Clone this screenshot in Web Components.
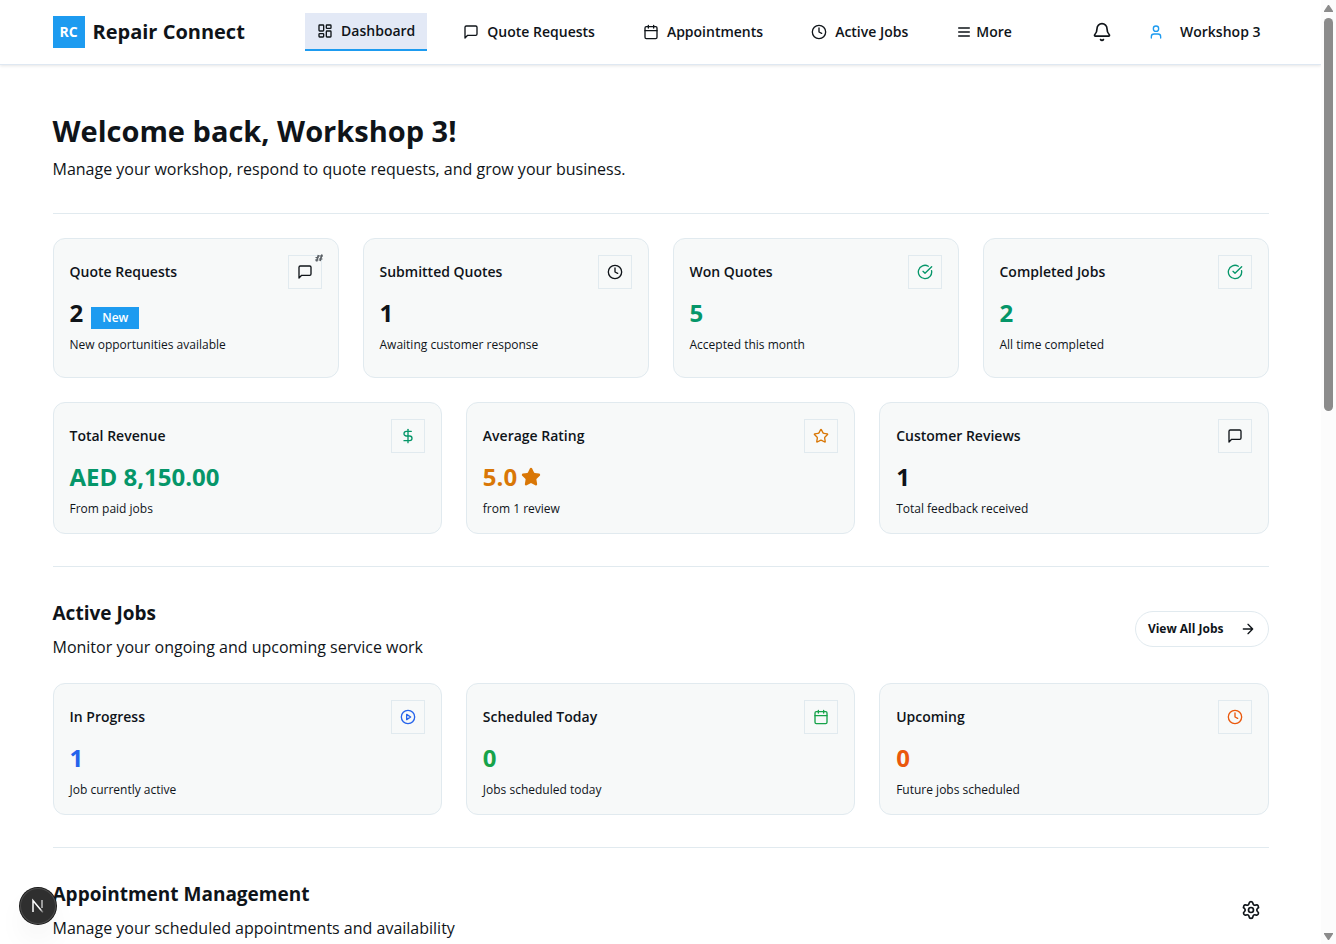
<!DOCTYPE html>
<html lang="en">
<head>
<meta charset="utf-8">
<title>Repair Connect</title>
<style>
  :root {
    --ink: #0f1419;
    --primary: #1d9bf0;
    --line: #e1eaef;
    --surface: #f7f9f9;
    --green: #059669;
    --amber: #d97706;
    --blue: #2563eb;
    --leaf: #16a34a;
    --orange: #ea580c;
  }
  html, body { height: 100%; }
  body {
    margin: 0;
    background: #fff;
    color: var(--ink);
    font-family: "Open Sans", "Noto Sans", sans-serif;
    font-size: 16px;
    line-height: 24px;
    overflow: hidden;
  }
</style>
</head>
<body>
<rc-app>
  <rc-header slot="header"></rc-header>

  <rc-heading level="1" heading="Welcome back, Workshop 3!">Manage your workshop, respond to quote requests, and grow your business.</rc-heading>
  <rc-divider></rc-divider>
  <rc-grid columns="4">
    <rc-stat label="Quote Requests" icon="message" badge="New" spark>2<span slot="note">New opportunities available</span></rc-stat>
    <rc-stat label="Submitted Quotes" icon="clock">1<span slot="note">Awaiting customer response</span></rc-stat>
    <rc-stat label="Won Quotes" icon="check" tone="green">5<span slot="note">Accepted this month</span></rc-stat>
    <rc-stat label="Completed Jobs" icon="check" tone="green">2<span slot="note">All time completed</span></rc-stat>
  </rc-grid>
  <rc-grid columns="3">
    <rc-stat label="Total Revenue" icon="dollar" tone="green">AED 8,150.00<span slot="note">From paid jobs</span></rc-stat>
    <rc-stat label="Average Rating" icon="star" tone="amber" mark="star">5.0<span slot="note">from 1 review</span></rc-stat>
    <rc-stat label="Customer Reviews" icon="message">1<span slot="note">Total feedback received</span></rc-stat>
  </rc-grid>

  <rc-section heading="Active Jobs">
    Monitor your ongoing and upcoming service work
    <rc-button slot="action" icon="arrow">View All Jobs</rc-button>
  </rc-section>
  <rc-grid columns="3">
    <rc-stat label="In Progress" icon="play" tone="blue">1<span slot="note">Job currently active</span></rc-stat>
    <rc-stat label="Scheduled Today" icon="calendar" tone="leaf">0<span slot="note">Jobs scheduled today</span></rc-stat>
    <rc-stat label="Upcoming" icon="clock" tone="orange">0<span slot="note">Future jobs scheduled</span></rc-stat>
  </rc-grid>

  <rc-section heading="Appointment Management">
    Manage your scheduled appointments and availability
    <rc-icon-button slot="action" icon="settings" label="Appointment settings"></rc-icon-button>
  </rc-section>

  <rc-scrollbar slot="scrollbar"></rc-scrollbar>
  <rc-devtools slot="overlay"></rc-devtools>
</rc-app>

<script>
const ICONS = {
  dashboard: '<rect x="3" y="3" width="7" height="9" rx="1"/><rect x="14" y="3" width="7" height="5" rx="1"/><rect x="14" y="12" width="7" height="9" rx="1"/><rect x="3" y="16" width="7" height="5" rx="1"/>',
  message: '<path d="M21 15a2 2 0 0 1-2 2H7l-4 4V5a2 2 0 0 1 2-2h14a2 2 0 0 1 2 2z"/>',
  calendar: '<path d="M8 2v4M16 2v4"/><rect x="3" y="4" width="18" height="18" rx="2"/><path d="M3 10h18"/>',
  clock: '<circle cx="12" cy="12" r="10"/><path d="M12 6v6l4 2"/>',
  menu: '<path d="M4 6h16M4 12h16M4 18h16"/>',
  bell: '<path d="M10.268 21a2 2 0 0 0 3.464 0"/><path d="M3.262 15.326A1 1 0 0 0 4 17h16a1 1 0 0 0 .74-1.673C19.41 13.956 18 12.499 18 8A6 6 0 0 0 6 8c0 4.499-1.411 5.956-2.738 7.326"/>',
  user: '<path d="M19 21v-2a4 4 0 0 0-4-4H9a4 4 0 0 0-4 4v2"/><circle cx="12" cy="7" r="4"/>',
  check: '<path d="M21.801 10A10 10 0 1 1 17 3.335"/><path d="m9 11 3 3L22 4"/>',
  dollar: '<path d="M12 2v20"/><path d="M17 5H9.5a3.5 3.5 0 0 0 0 7h5a3.5 3.5 0 0 1 0 7H6"/>',
  star: '<path d="M11.525 2.295a.53.53 0 0 1 .95 0l2.31 4.679a2.123 2.123 0 0 0 1.595 1.16l5.166.756a.53.53 0 0 1 .294.904l-3.736 3.638a2.123 2.123 0 0 0-.611 1.878l.882 5.14a.53.53 0 0 1-.771.56l-4.618-2.428a2.122 2.122 0 0 0-1.973 0L6.396 21.01a.53.53 0 0 1-.77-.56l.881-5.139a2.122 2.122 0 0 0-.611-1.879L2.16 9.795a.53.53 0 0 1 .294-.906l5.165-.755a2.122 2.122 0 0 0 1.597-1.16z"/>',
  play: '<circle cx="12" cy="12" r="10"/><path d="m10 8 6 4-6 4z"/>',
  arrow: '<path d="M5 12h14M12 5l7 7-7 7"/>',
  settings: '<path d="M9.671 4.136a2.34 2.34 0 0 1 4.659 0 2.34 2.34 0 0 0 3.319 1.915 2.34 2.34 0 0 1 2.33 4.033 2.34 2.34 0 0 0 0 3.831 2.34 2.34 0 0 1-2.33 4.033 2.34 2.34 0 0 0-3.319 1.915 2.34 2.34 0 0 1-4.659 0 2.34 2.34 0 0 0-3.32-1.915 2.34 2.34 0 0 1-2.33-4.033 2.34 2.34 0 0 0 0-3.831A2.34 2.34 0 0 1 6.35 6.051a2.34 2.34 0 0 0 3.319-1.915"/><circle cx="12" cy="12" r="3"/>'
};

class Base extends HTMLElement {
  connectedCallback() {
    if (this.shadowRoot) return;
    this.attachShadow({ mode: 'open' }).innerHTML =
      `<style>*{box-sizing:border-box}:host{display:block}${this.css()}</style>${this.html()}`;
  }
  attr(name, fallback = '') { return this.getAttribute(name) ?? fallback; }
  css() { return ''; }
  html() { return '<slot></slot>'; }
}

customElements.define('rc-icon', class extends Base {
  css() {
    const s = this.attr('size', '16');
    return `:host{display:block;flex:none;width:${s}px;height:${s}px}svg{display:block;width:100%;height:100%}`;
  }
  html() {
    const fill = this.hasAttribute('filled') ? 'currentColor' : 'none';
    return `<svg viewBox="0 0 24 24" fill="${fill}" stroke="currentColor" stroke-width="2" stroke-linecap="round" stroke-linejoin="round" aria-hidden="true">${ICONS[this.attr('name')]}</svg>`;
  }
});

customElements.define('rc-app', class extends Base {
  css() { return `
    :host{display:flex;height:100vh;overflow:hidden}
    .view{flex:1;min-width:0;overflow:hidden}
    main{display:block;max-width:1280px;margin:0 auto;padding:48px 32px}
  `; }
  html() { return `
    <div class="view"><slot name="header"></slot><main><slot></slot></main></div>
    <slot name="scrollbar"></slot><slot name="overlay"></slot>`; }
});

customElements.define('rc-header', class extends Base {
  css() { return `
    :host{border-bottom:1px solid #dfe8f2;box-shadow:0 1px 3px rgba(0,0,0,.1)}
    header{display:flex;align-items:center;justify-content:space-between;max-width:1280px;height:64px;margin:0 auto;padding:0 32px}
    .brand{display:flex;align-items:center;gap:8px;color:inherit;text-decoration:none;font-size:20px;font-weight:700;line-height:28px}
    .logo{display:grid;place-items:center;width:32px;height:32px;background:var(--primary);color:#fff;font-size:14px;font-weight:700;line-height:20px}
    nav,.tools{display:flex;align-items:center}
    nav{gap:24px}
    .tools{gap:16px}
  `; }
  html() { return `
    <header>
      <a class="brand" href="#"><span class="logo">RC</span><span>Repair Connect</span></a>
      <nav aria-label="Main">
        <rc-nav-link icon="dashboard" active>Dashboard</rc-nav-link>
        <rc-nav-link icon="message">Quote Requests</rc-nav-link>
        <rc-nav-link icon="calendar">Appointments</rc-nav-link>
        <rc-nav-link icon="clock">Active Jobs</rc-nav-link>
        <rc-menu-button icon="menu">More</rc-menu-button>
      </nav>
      <div class="tools">
        <rc-icon-button icon="bell" label="Notifications"></rc-icon-button>
        <rc-menu-button icon="user" account>Workshop 3</rc-menu-button>
      </div>
    </header>`; }
});

customElements.define('rc-nav-link', class extends Base {
  css() { return `
    a{display:flex;align-items:center;gap:8px;height:36px;padding:0 12px;color:inherit;text-decoration:none;font-size:14px;font-weight:600;line-height:20px}
    :host([active]) a{height:38px;background:#e3e9f6;border-bottom:2px solid var(--primary)}
  `; }
  html() {
    return `<a href="#"${this.hasAttribute('active') ? ' aria-current="page"' : ''}><rc-icon name="${this.attr('icon')}"></rc-icon><slot></slot></a>`;
  }
});

customElements.define('rc-menu-button', class extends Base {
  css() { return `
    button{display:flex;align-items:center;gap:4px;height:36px;padding:0 12px;border:0;background:none;color:inherit;font:600 14px/20px "Open Sans","Noto Sans",sans-serif}
    :host([account]) button{gap:16px;padding-right:8px}
    :host([account]) rc-icon{color:var(--primary)}
  `; }
  html() { return `<button type="button"><rc-icon name="${this.attr('icon')}"></rc-icon><slot></slot></button>`; }
});

customElements.define('rc-icon-button', class extends Base {
  css() { return `button{display:grid;place-items:center;width:36px;height:36px;padding:0;border:0;background:none;color:inherit}`; }
  html() { return `<button type="button" aria-label="${this.attr('label')}"><rc-icon name="${this.attr('icon')}" size="20"></rc-icon></button>`; }
});

customElements.define('rc-button', class extends Base {
  css() { return `
    button{display:flex;align-items:center;gap:16px;height:36px;padding:0 12px;border:1px solid var(--line);border-radius:18px;background:#fff;color:inherit;font:700 12px/16px "Open Sans","Noto Sans",sans-serif}
  `; }
  html() { return `<button type="button"><slot></slot><rc-icon name="${this.attr('icon')}"></rc-icon></button>`; }
});

customElements.define('rc-divider', class extends Base {
  css() { return `hr{margin:32px 0 0;border:0;border-top:1px solid var(--line)}`; }
  html() { return '<hr>'; }
});

customElements.define('rc-heading', class extends Base {
  css() { return `
    h1,h2{margin:0 0 8px;font-weight:700}
    h1{font-size:29px;line-height:36px}
    h2{font-size:19px;line-height:28px}
    p{margin:0;font-size:16px;line-height:24px}
  `; }
  html() {
    const tag = 'h' + this.attr('level', '2');
    return `<${tag}>${this.attr('heading')}</${tag}><p><slot></slot></p>`;
  }
});

customElements.define('rc-section', class extends Base {
  css() { return `.bar{display:flex;align-items:center;justify-content:space-between;margin-top:32px}`; }
  html() { return `
    <rc-divider></rc-divider>
    <div class="bar"><rc-heading heading="${this.attr('heading')}"><slot></slot></rc-heading><slot name="action"></slot></div>`; }
});

customElements.define('rc-grid', class extends Base {
  css() { return `
    :host{display:grid;grid-template-columns:repeat(${this.attr('columns', '3')},minmax(0,1fr));gap:24px;margin-top:24px}
    :host([columns="4"]){grid-auto-rows:minmax(140px,auto)}
  `; }
});

customElements.define('rc-stat', class extends Base {
  css() {
    const tone = this.attr('tone', 'ink');
    return `
    article{height:100%;padding:16px;border:1px solid var(--line);border-radius:12px;background:var(--surface)}
    .top{display:flex;align-items:center;justify-content:space-between}
    h3{margin:0;font-size:14px;font-weight:600;line-height:20px}
    .tile{position:relative;display:grid;place-items:center;width:34px;height:34px;border:1px solid var(--line);color:var(--${tone})}
    .spark{position:absolute;top:-3px;right:-3px;width:10px;height:10px;color:#5b6166}
    .value{display:flex;align-items:center;gap:4px;height:32px;margin:8px 0;color:var(--${tone});font-size:24px;font-weight:700;line-height:32px}
    .badge{align-self:flex-end;margin-left:4px;padding:3px 11px;background:var(--primary);color:#fff;font-size:12px;font-weight:600;line-height:16px}
    .note{margin:0;font-size:12px;line-height:16px}
    `;
  }
  html() {
    const badge = this.attr('badge');
    const mark = this.attr('mark');
    const spark = this.hasAttribute('spark')
      ? '<svg class="spark" viewBox="0 0 10 10" fill="none" stroke="currentColor" aria-hidden="true"><path d="M4.500 2 2.500 8.500M8 1.500 6 8" stroke-width="1.700"/><path d="M1.500 4.500h3M1 7h3.500M5 3h4M5 6h3.500" stroke-width="1"/></svg>' : '';
    return `
    <article>
      <div class="top"><h3>${this.attr('label')}</h3><div class="tile"><rc-icon name="${this.attr('icon')}"></rc-icon>${spark}</div></div>
      <div class="value"><span><slot></slot></span>${badge ? `<span class="badge">${badge}</span>` : ''}${mark ? `<rc-icon name="${mark}" size="20" filled></rc-icon>` : ''}</div>
      <p class="note"><slot name="note"></slot></p>
    </article>`;
  }
});

customElements.define('rc-scrollbar', class extends Base {
  css() { return `
    :host{display:flex;flex-direction:column;align-items:center;flex:none;width:15px;height:100%;background:#fcfcfc}
    svg{display:block;flex:none;width:9px;height:18px;fill:#8b8b8b}
    .track{flex:1;width:9px}
    .thumb{height:43.3%;border-radius:5px;background:#8b8b8b}
  `; }
  html() { return `
    <svg viewBox="0 0 9 18" aria-hidden="true"><path d="M4 5h1l4 6v1H0v-1z"/></svg>
    <div class="track"><div class="thumb"></div></div>
    <svg viewBox="0 0 9 18" aria-hidden="true"><path d="M4 14h1l4-6V7H0v1z"/></svg>`; }
});

customElements.define('rc-devtools', class extends Base {
  css() { return `
    :host{position:fixed;left:20px;bottom:20px}
    button{display:grid;place-items:center;width:36px;height:36px;padding:0;border:0;border-radius:50%;background:#2f2f2f;color:#fff;
      box-shadow:0 0 0 1px #171717,inset 0 0 0 1px #4a4a4a,0 16px 32px -8px rgba(0,0,0,.14)}
    svg{display:block;width:16px;height:16px}
  `; }
  html() { return `
    <button type="button" aria-label="Open developer tools">
      <svg viewBox="0 0 16 16" fill="none" stroke-width="1.5" aria-hidden="true">
        <defs>
          <linearGradient id="a" gradientUnits="userSpaceOnUse" x1="8" y1="8" x2="14" y2="15"><stop offset=".4" stop-color="#fff"/><stop offset="1" stop-color="#fff" stop-opacity="0"/></linearGradient>
          <linearGradient id="b" gradientUnits="userSpaceOnUse" x1="12" y1="2" x2="12" y2="11"><stop stop-color="#fff"/><stop offset="1" stop-color="#fff" stop-opacity="0"/></linearGradient>
        </defs>
        <path d="M3 14V2.500l10 12" stroke="url(#a)"/><path d="M12 2v8" stroke="#fff" stroke-opacity=".7"/>
      </svg>
    </button>`; }
});
</script>
</body>
</html>
